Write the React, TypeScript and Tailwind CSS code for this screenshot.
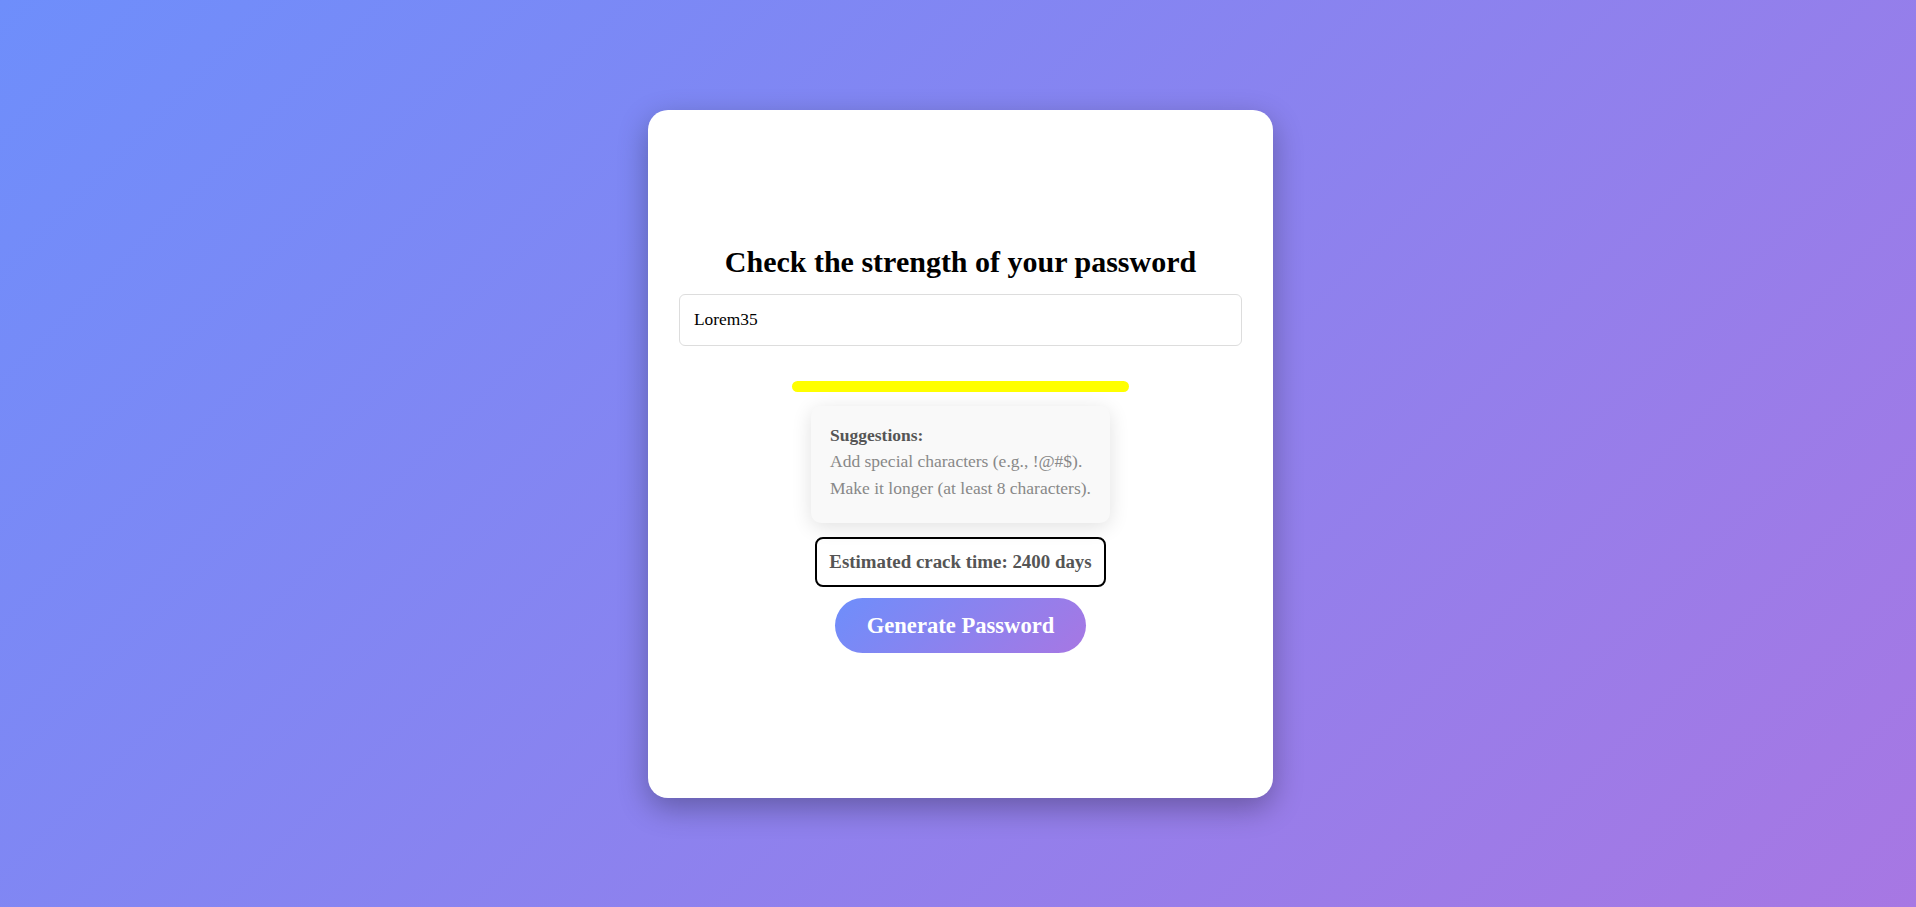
import React, { useState } from "react";

const serif = { fontFamily: '"Liberation Serif", "Times New Roman", serif' };

export default function App() {
  const [password, setPassword] = useState("Lorem35");

  return (
    <div
      className="min-h-screen w-full flex items-center justify-center pl-[5px] bg-[linear-gradient(135deg,#6e8efb,#a777e3)]"
      style={serif}
    >
      <div className="w-[625px] h-[688px] rounded-[20px] bg-white px-[31px] pb-[8px] flex flex-col items-center justify-center shadow-[0_10px_30px_rgba(0,0,0,0.3)]">
        <h2 className="text-[30px] leading-[32px] font-bold text-black mb-[16px]">
          Check the strength of your password
        </h2>
        <input
          type="text"
          value={password}
          onChange={(e) => setPassword(e.target.value)}
          className="w-full h-[52px] px-[14px] text-[17.4px] text-black border border-[#dddddd] rounded-[6px] outline-none"
        />
        <div className="w-[60%] h-[11px] rounded-full bg-[#ffff00] mt-[35px]" />
        <div className="mt-[14px] rounded-[10px] bg-[#f9f9f9] px-[19px] pt-[16px] pb-[22px] text-[17.5px] leading-[26.5px] shadow-[0_4px_20px_rgba(0,0,0,0.12)]">
          <div className="font-bold text-[#555555]">Suggestions:</div>
          <div className="text-[#888888]">Add special characters (e.g., !@#$).</div>
          <div className="text-[#888888]">Make it longer (at least 8 characters).</div>
        </div>
        <div className="mt-[14px] h-[50px] flex items-center px-[12px] border-2 border-black rounded-[8px] text-[18.9px] font-bold text-[#555555]">
          Estimated crack time: 2400 days
        </div>
        <button className="mt-[11px] h-[55px] px-[32px] rounded-full text-[22.6px] font-bold text-white bg-[linear-gradient(135deg,#6e8efb,#a777e3)]">
          Generate Password
        </button>
      </div>
    </div>
  );
}
